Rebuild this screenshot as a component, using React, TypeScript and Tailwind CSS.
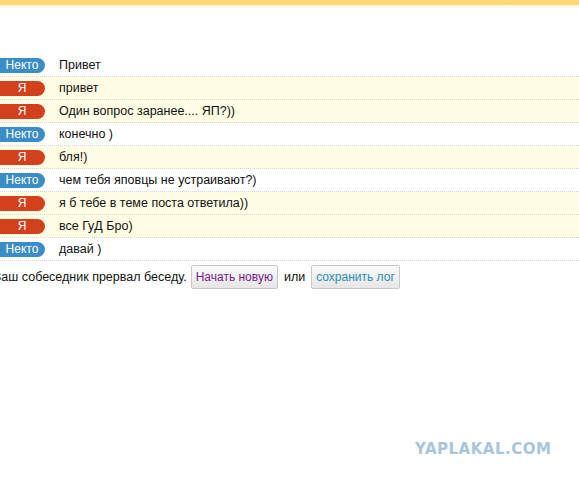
const messages: { who: "me" | "stranger"; text: string }[] = [
  { who: "stranger", text: "Привет" },
  { who: "me", text: "привет" },
  { who: "me", text: "Один вопрос заранее.... ЯП?))" },
  { who: "stranger", text: "конечно )" },
  { who: "me", text: "бля!)" },
  { who: "stranger", text: "чем тебя яповцы не устраивают?)" },
  { who: "me", text: "я б тебе в теме поста ответила))" },
  { who: "me", text: "все ГуД Бро)" },
  { who: "stranger", text: "давай )" },
];

function Badge({ who }: { who: "me" | "stranger" }) {
  const me = who === "me";
  return (
    <span
      className={
        me
          ? "flex h-[15px] w-[52px] shrink-0 items-center justify-center rounded-full bg-[#d3401e] pl-[6px] text-[12px] leading-none text-white"
          : "flex h-[15px] w-[52px] shrink-0 items-center justify-center rounded-full bg-[#3a8dc5] pl-[6px] text-[12px] leading-none text-white"
      }
    >
      {me ? "Я" : "Некто"}
    </span>
  );
}

export default function App() {
  return (
    <div className="relative h-[479px] w-[579px] overflow-hidden bg-white font-['Liberation_Sans',Arial,sans-serif] text-[12.5px] text-[#111]">
      <div className="h-[5px] bg-[#fbd973]" />
      <div className="h-[4px] bg-gradient-to-b from-[#fdf3d0] to-white" />

      <div className="ml-[-7px] mt-[45px]">
        {messages.map((m, i) => (
          <div
            key={i}
            className={
              m.who === "me"
                ? "flex h-[23px] items-center gap-[14px] border-b border-dotted border-[#d6d6cc] bg-[#fffde4]"
                : "flex h-[23px] items-center gap-[14px] border-b border-dotted border-[#d6d6cc] bg-white"
            }
          >
            <Badge who={m.who} />
            <span>{m.text}</span>
          </div>
        ))}

        <div className="mt-[4px] flex items-center">
          <span>Ваш собеседник прервал беседу.</span>
          <button className="ml-[4px] h-[24px] rounded-[2px] border border-[#c8c8c8] bg-gradient-to-b from-[#fafafa] to-[#e6e6e6] px-[4px] text-[12px] text-[#7a1a8a]">
            Начать новую
          </button>
          <span className="mx-[6px]">или</span>
          <button className="h-[24px] rounded-[2px] border border-[#c8c8c8] bg-gradient-to-b from-[#fafafa] to-[#e6e6e6] px-[4px] text-[12px] text-[#2b8db5]">
            сохранить лог
          </button>
        </div>
      </div>

      <div className="absolute left-[415px] top-[442px] font-['DejaVu_Sans',sans-serif] text-[15px] font-black leading-none tracking-[0.5px] text-[#a9c5dc]">
        YAPLAKAL.COM
      </div>
    </div>
  );
}
